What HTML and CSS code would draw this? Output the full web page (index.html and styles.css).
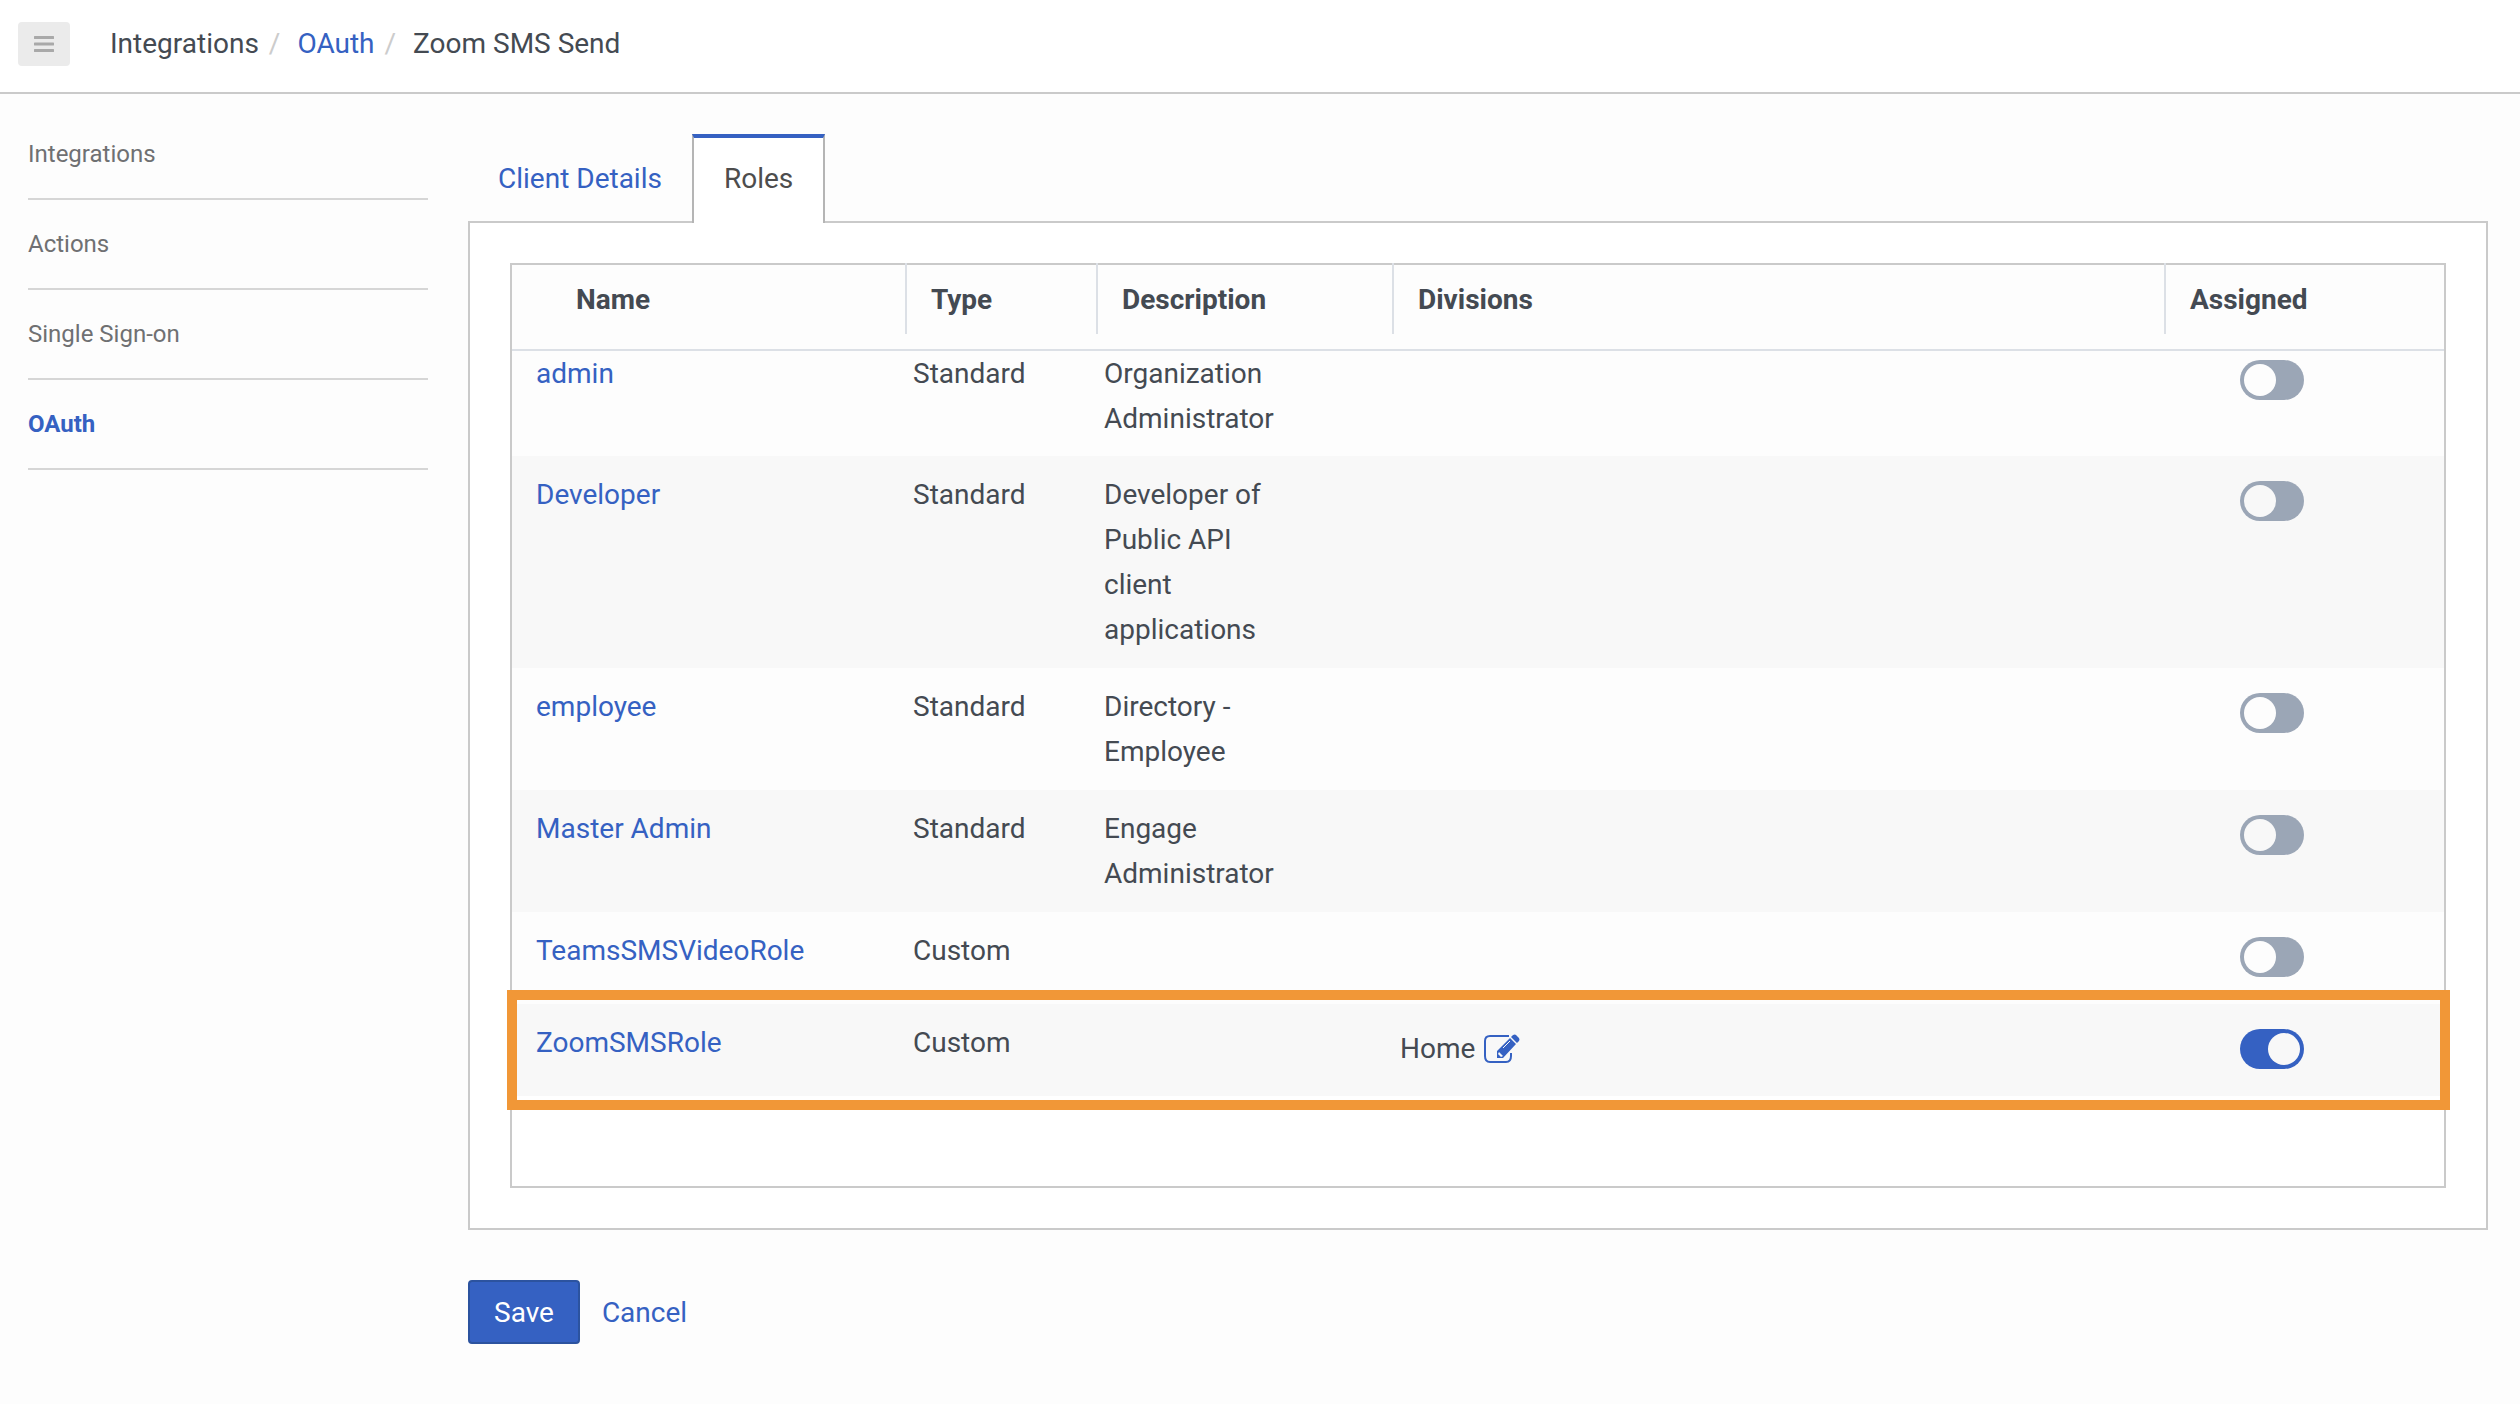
FILE: index.html
```html
<!DOCTYPE html>
<html lang="en">
<head>
<meta charset="utf-8">
<meta name="viewport" content="width=device-width, initial-scale=1">
<title>Zoom SMS Send - OAuth</title>
<link rel="stylesheet" href="styles.css">
</head>
<body>
<header class="topbar">
  <button class="menu-button" type="button" aria-label="Toggle menu">
    <svg width="20" height="18" viewBox="0 0 20 18" aria-hidden="true"><path d="M1 2.500h18M1 9h18M1 15.500h18" stroke="#a9a9a9" stroke-width="3" stroke-linecap="round"/></svg>
  </button>
  <nav aria-label="Breadcrumb">
    <ol class="breadcrumb">
      <li>Integrations</li>
      <li><a href="#">OAuth</a></li>
      <li>Zoom SMS Send</li>
    </ol>
  </nav>
</header>
<div class="layout">
  <nav class="sidebar" aria-label="Sections">
    <a href="#">Integrations</a>
    <a href="#">Actions</a>
    <a href="#">Single Sign-on</a>
    <a class="current" href="#">OAuth</a>
  </nav>
  <main class="content">
    <nav class="tabs" aria-label="Client">
      <a class="tab" href="#">Client Details</a>
      <a class="tab active" href="#">Roles</a>
    </nav>
    <section class="panel">
      <div class="table-frame">
        <table class="roles">
          <colgroup>
            <col class="col-name"><col class="col-type"><col class="col-description"><col><col class="col-assigned">
          </colgroup>
          <thead>
            <tr>
              <th scope="col"><span class="head first">Name</span></th>
              <th scope="col"><span class="head">Type</span></th>
              <th scope="col"><span class="head">Description</span></th>
              <th scope="col"><span class="head">Divisions</span></th>
              <th scope="col"><span class="head">Assigned</span></th>
            </tr>
          </thead>
          <tbody>
            <tr>
              <td><a href="#">admin</a></td><td>Standard</td><td>Organization Administrator</td><td></td>
              <td><input class="toggle" type="checkbox" aria-label="Assign admin"></td>
            </tr>
            <tr>
              <td><a href="#">Developer</a></td><td>Standard</td><td>Developer of Public API client applications</td><td></td>
              <td><input class="toggle" type="checkbox" aria-label="Assign Developer"></td>
            </tr>
            <tr>
              <td><a href="#">employee</a></td><td>Standard</td><td>Directory - Employee</td><td></td>
              <td><input class="toggle" type="checkbox" aria-label="Assign employee"></td>
            </tr>
            <tr>
              <td><a href="#">Master Admin</a></td><td>Standard</td><td>Engage Administrator</td><td></td>
              <td><input class="toggle" type="checkbox" aria-label="Assign Master Admin"></td>
            </tr>
            <tr>
              <td><a href="#">TeamsSMSVideoRole</a></td><td>Custom</td><td></td><td></td>
              <td><input class="toggle" type="checkbox" aria-label="Assign TeamsSMSVideoRole"></td>
            </tr>
            <tr class="highlighted">
              <td><a href="#">ZoomSMSRole</a></td><td>Custom</td><td></td>
              <td>
                <div class="division">Home
                  <button class="edit-button" type="button" aria-label="Edit divisions">
                    <svg width="36" height="30" viewBox="0 0 36 30" aria-hidden="true">
                      <path d="M25 2H6Q1 2 1 7V22Q1 28 6 28H22Q27 28 27 22V19" fill="none" stroke="#3561c2" stroke-width="2"/>
                      <path d="M13 24V17L26 4L32 10L19 24ZM27 3L29 1Q31 0 32 1L35 4Q36 6 35 7L33 9Z" fill="#3561c2"/>
                      <path d="M19 14L26 7" stroke="#f8f8f8" stroke-width="1"/>
                      <path d="M15 18L19 22L17 23L14 20Z" fill="#f8f8f8"/>
                    </svg>
                  </button>
                </div>
              </td>
              <td><input class="toggle" type="checkbox" aria-label="Assign ZoomSMSRole" checked></td>
            </tr>
          </tbody>
        </table>
      </div>
    </section>
    <div class="actions">
      <button class="save" type="button">Save</button>
      <a href="#">Cancel</a>
    </div>
  </main>
</div>
</body>
</html>
```
FILE: styles.css
```css
* { box-sizing: border-box; }

body {
  margin: 0;
  background: #fdfdfd;
  color: #444a52;
  font: 28px/45px Roboto, "Liberation Sans", sans-serif;
}

a { color: #3561c2; text-decoration: none; }

button { font: inherit; padding: 0; cursor: pointer; }

.topbar {
  display: flex;
  align-items: center;
  gap: 40px;
  padding: 21px 18px 26px;
  background: #fff;
  border-bottom: 2px solid #cacaca;
}

.menu-button {
  display: flex;
  align-items: center;
  justify-content: center;
  width: 52px;
  height: 44px;
  border: 0;
  border-radius: 4px;
  background: #ebebeb;
}

.breadcrumb {
  display: flex;
  margin: 0;
  padding: 0;
  list-style: none;
}

.breadcrumb li + li::before {
  content: "/";
  padding: 0 17px 0 10px;
  color: #ccc;
}

.layout { display: flex; gap: 40px; padding: 0 32px 60px 28px; }

.sidebar { flex: 0 0 400px; padding-top: 16px; }

.sidebar a {
  display: block;
  padding: 22px 0 21px;
  border-bottom: 2px solid #d6d6d6;
  color: #6f7072;
  font-size: 24px;
}

.sidebar .current { color: #3561c2; font-weight: 700; }

.content { flex: 1; min-width: 0; padding-top: 40px; }

.tabs { display: flex; }

.tab {
  padding: 22px 30px;
  margin-bottom: -2px;
}

.tab.active {
  position: relative;
  padding-top: 18px;
  border: solid #b5b5b5;
  border-width: 4px 2px 0;
  border-top-color: #3561c2;
  background: #fff;
  color: #4d4d4d;
}

.panel {
  padding: 40px;
  border: 2px solid #cacaca;
  background: #fff;
}

.table-frame { padding-bottom: 90px; border: 2px solid #cacaca; }

.roles {
  width: 100%;
  border-collapse: separate;
  border-spacing: 0;
  table-layout: fixed;
}

.col-name { width: 393px; }
.col-type { width: 191px; }
.col-description { width: 296px; }
.col-assigned { width: 280px; }

.roles th {
  height: 86px;
  padding: 0;
  border-bottom: 2px solid #dce0e6;
  background: #fdfdfd;
  text-align: left;
  vertical-align: top;
}

.head {
  display: block;
  height: 71px;
  margin-top: -2px;
  padding: 14px 0 0 24px;
  border-left: 2px solid #dce0e6;
}

.head.first {
  margin-top: 0;
  padding: 12px 0 0 64px;
  border-left: 0;
}

.roles tbody tr { --row: #fdfdfd; background: var(--row); }
.roles tbody tr:nth-child(even) { --row: #f8f8f8; }

.roles td {
  height: 92px;
  padding: 16px 100px 16px 8px;
  vertical-align: top;
}

.roles tbody tr:first-child td { padding-top: 0; padding-bottom: 15px; }
.roles td:first-child { padding-left: 24px; padding-right: 0; }
.roles td:nth-child(2), .roles td:nth-child(4) { padding-right: 0; }
.roles td:last-child { padding-left: 76px; padding-right: 0; }

.toggle {
  display: block;
  width: 64px;
  height: 40px;
  margin: 9px 0 0;
  padding: 4px;
  border-radius: 20px;
  background: #9ba6b6;
  appearance: none;
}

.toggle::before {
  content: "";
  display: block;
  width: 32px;
  height: 32px;
  border-radius: 50%;
  background: var(--row);
}

.toggle:checked { background: #3561c2; }
.toggle:checked::before { margin-left: auto; }

.division { display: flex; align-items: center; gap: 9px; padding-top: 6px; }

.edit-button { display: flex; border: 0; background: none; }

.highlighted { position: relative; }

/* Callout frame around the whole row, drawn from its first cell */
.highlighted td:first-child::after {
  content: "";
  position: absolute;
  inset: -14px -6px -14px -5px;
  border: 10px solid #f19737;
  pointer-events: none;
}

.actions { display: flex; align-items: center; gap: 22px; margin-top: 50px; }

.save {
  height: 64px;
  padding: 0 24px;
  border: 2px solid #2c539f;
  border-radius: 4px;
  background: #3561c2;
  color: #fff;
}
```
